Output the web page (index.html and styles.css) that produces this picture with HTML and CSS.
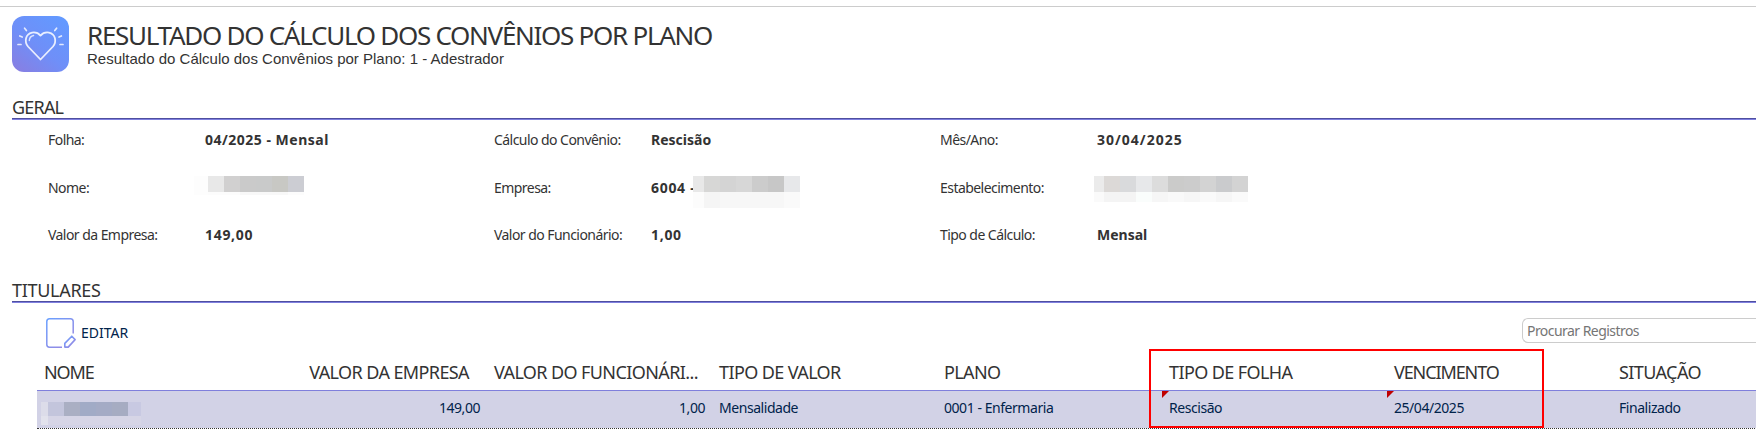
FILE: index.html
```html
<!DOCTYPE html>
<html lang="pt-BR">
<head>
    <meta charset="UTF-8">
    <meta name="viewport" content="width=device-width, initial-scale=1.0">
    <title>Resultado do Cálculo dos Convênios por Plano</title>
    <link rel="stylesheet" href="styles.css">
</head>
<body>
    <div class="header">
        <svg class="logo" width="57" height="56" viewBox="0 0 57 56">
            <defs>
                <linearGradient id="logoFill" x1="0" y1="1" x2="0.8" y2="0">
                    <stop offset="0" stop-color="#8a7de0" />
                    <stop offset="0.5" stop-color="#6f8ff8" />
                    <stop offset="1" stop-color="#6399ff" />
                </linearGradient>
            </defs>
            <rect width="57" height="56" rx="12" fill="url(#logoFill)" />
            <g fill="none" stroke="#fff" stroke-linecap="round" stroke-linejoin="round">
                <path stroke-width="1.8" opacity="0.85" d="M28.5 43.5 L16 30.5 C12 25.5 13.5 18 20 16.6 C23.5 16 26.5 17.2 28.5 19.6 C30.5 17.2 33.5 16 37 16.6 C43.5 18 45 25.5 41 30.5 Z" />
                <path stroke-width="1.4" opacity="0.75" d="M17.3 24.5 C17.5 21.5 19 20 21.6 19.5" />
                <path stroke-width="1.7" opacity="0.8" d="M12.6 12.2 L14.4 14.6 M7.8 20 L10.2 21 M6 28.5 H9 M44.6 12.2 L42.8 14.6 M49.4 20 L47 21 M51 28.5 H48" />
            </g>
        </svg>
        <div class="titles">
            <h1>RESULTADO DO CÁLCULO DOS CONVÊNIOS POR PLANO</h1>
            <p>Resultado do Cálculo dos Convênios por Plano: 1 - Adestrador</p>
        </div>
    </div>

    <h2 class="section">GERAL</h2>
    <div class="fields">
        <div class="label">Folha:</div>
        <div class="value period">04/2025 - Mensal</div>
        <div class="label">Cálculo do Convênio:</div>
        <div class="value">Rescisão</div>
        <div class="label">Mês/Ano:</div>
        <div class="value date">30/04/2025</div>

        <div class="label">Nome:</div>
        <div class="value">
            <svg class="mask mask-nome" width="110" height="19" shape-rendering="crispEdges">
                <rect width="14" height="19" fill="#fdfdfd" />
                <rect x="14" width="16" height="16" fill="#e8e8e8" />
                <rect x="30" width="16" height="16" fill="#d1d0d0" />
                <rect x="46" width="16" height="16" fill="#cacaca" />
                <rect x="62" width="16" height="16" fill="#c9caca" />
                <rect x="78" width="16" height="16" fill="#c8c8c4" />
                <rect x="94" width="16" height="16" fill="#cccdd3" />
                <rect x="14" y="16" width="32" height="3" fill="#fcfcfc" />
                <rect x="46" y="16" width="48" height="3" fill="#f8f8f8" />
                <rect x="94" y="16" width="16" height="3" fill="#fcfcfc" />
            </svg>
        </div>
        <div class="label">Empresa:</div>
        <div class="value number">6004 -
            <svg class="mask mask-empresa" width="107" height="32" shape-rendering="crispEdges">
                <rect width="11" height="16" fill="#e8e8e8" />
                <rect x="11" width="16" height="16" fill="#d7d7d6" />
                <rect x="27" width="16" height="16" fill="#d4d4d4" />
                <rect x="43" width="16" height="16" fill="#d7d7d7" />
                <rect x="59" width="16" height="16" fill="#cccccc" />
                <rect x="75" width="16" height="16" fill="#c7c7c7" />
                <rect x="91" width="16" height="16" fill="#e7e8ea" />
                <rect y="16" width="11" height="16" fill="#fcfcfc" />
                <rect x="11" y="16" width="16" height="16" fill="#f5f5f5" />
                <rect x="27" y="16" width="64" height="16" fill="#f7f7f7" />
                <rect x="91" y="16" width="16" height="16" fill="#fafafa" />
            </svg>
        </div>
        <div class="label">Estabelecimento:</div>
        <div class="value">
            <svg class="mask mask-estab" width="154" height="26" shape-rendering="crispEdges">
                <rect width="10" height="16" fill="#ebebeb" />
                <rect x="10" width="16" height="16" fill="#dcd9d7" />
                <rect x="26" width="16" height="16" fill="#d9dadc" />
                <rect x="42" width="16" height="16" fill="#e7e8ea" />
                <rect x="58" width="16" height="16" fill="#dcdcdc" />
                <rect x="74" width="16" height="16" fill="#cbcbca" />
                <rect x="90" width="16" height="16" fill="#cccccc" />
                <rect x="106" width="16" height="16" fill="#d3d3d3" />
                <rect x="122" width="16" height="16" fill="#cacbcd" />
                <rect x="138" width="16" height="16" fill="#d3d3d3" />
                <rect y="16" width="10" height="10" fill="#fafafa" />
                <rect x="10" y="16" width="32" height="10" fill="#f4f4f4" />
                <rect x="42" y="16" width="16" height="10" fill="#fafdfc" />
                <rect x="58" y="16" width="16" height="10" fill="#f6f6f6" />
                <rect x="74" y="16" width="16" height="10" fill="#f9f9f9" />
                <rect x="90" y="16" width="16" height="10" fill="#f6f6f6" />
                <rect x="106" y="16" width="16" height="10" fill="#fafafa" />
                <rect x="122" y="16" width="16" height="10" fill="#f6f6f6" />
                <rect x="138" y="16" width="16" height="10" fill="#fafafa" />
            </svg>
        </div>

        <div class="label">Valor da Empresa:</div>
        <div class="value number">149,00</div>
        <div class="label">Valor do Funcionário:</div>
        <div class="value number">1,00</div>
        <div class="label">Tipo de Cálculo:</div>
        <div class="value">Mensal</div>
    </div>

    <h2 class="section section-titulares">TITULARES</h2>
    <div class="toolbar">
        <button class="edit">
            <svg width="30" height="30" viewBox="0 0 30 30" fill="none">
                <defs>
                    <linearGradient id="editStroke" x1="0" y1="0" x2="0.7" y2="0.8">
                        <stop offset="0" stop-color="#6aa0ff" />
                        <stop offset="1" stop-color="#918ce6" />
                    </linearGradient>
                </defs>
                <path stroke="url(#editStroke)" stroke-width="1.5" d="M27.2 15.5 V3.5 Q27.2 0.8 24.5 0.8 H3.5 Q0.8 0.8 0.8 3.5 V26.5 Q0.8 29.2 3.5 29.2 H16" />
                <path stroke="url(#editStroke)" stroke-width="1.6" stroke-linejoin="round" d="M18.8 29.1 V25.4 L25.8 18.2 L29.1 21.6 L22.2 29.1 Z" />
            </svg>
            <span>EDITAR</span>
        </button>
        <input class="search" type="text" placeholder="Procurar Registros">
    </div>

    <div class="grid">
        <div class="row head">
            <div class="cell tight">NOME</div>
            <div class="cell num">VALOR DA EMPRESA</div>
            <div class="cell num">VALOR DO FUNCIONÁRI...</div>
            <div class="cell">TIPO DE VALOR</div>
            <div class="cell">PLANO</div>
            <div class="cell">TIPO DE FOLHA</div>
            <div class="cell tight">VENCIMENTO</div>
            <div class="cell">SITUAÇÃO</div>
        </div>
        <div class="row selected">
            <div class="cell">
                <svg class="mask mask-titular" width="100" height="23" shape-rendering="crispEdges">
                    <rect width="7" height="14" fill="#dcdce9" />
                    <rect x="7" width="16" height="14" fill="#c3c5dc" />
                    <rect x="23" width="16" height="14" fill="#aaafc3" />
                    <rect x="39" width="16" height="14" fill="#a1abc6" />
                    <rect x="55" width="16" height="14" fill="#a4abc5" />
                    <rect x="71" width="16" height="14" fill="#a6acc2" />
                    <rect x="87" width="13" height="14" fill="#c8c9e2" />
                    <rect y="14" width="7" height="9" fill="#e2e2ec" />
                    <rect x="7" y="14" width="93" height="9" fill="#d6d5e6" />
                </svg>
            </div>
            <div class="cell num">149,00</div>
            <div class="cell num">1,00</div>
            <div class="cell">Mensalidade</div>
            <div class="cell">0001 - Enfermaria</div>
            <div class="cell changed">Rescisão</div>
            <div class="cell changed">25/04/2025</div>
            <div class="cell">Finalizado</div>
        </div>
        <div class="highlight"></div>
    </div>
</body>
</html>
```
FILE: styles.css
```css
body {
    margin: 0;
    padding-top: 6px;
    font-family: "Noto Sans", sans-serif;
    font-size: 14px;
    background-color: #fff;
    color: #333;
    overflow: hidden;
}

.header {
    display: flex;
    gap: 18px;
    height: 87px;
    padding: 9px 0 0 12px;
    box-sizing: border-box;
    border-top: 1px solid #ccc;
}

.titles h1 {
    margin: 5px 0 0;
    font-size: 26px;
    font-weight: normal;
    line-height: 28px;
    letter-spacing: -1.28px;
    white-space: nowrap;
}

.titles p {
    margin: 1px 0 0;
    font-family: "Liberation Sans", Arial, sans-serif;
    font-size: 15px;
    line-height: 18px;
}

.section {
    height: 25px;
    margin: 0 0 0 12px;
    font-size: 18px;
    font-weight: normal;
    line-height: 29px;
    letter-spacing: -0.8px;
    border-bottom: 1px solid #8080e0;
    box-shadow: inset 0 -1px #4f4f9f;
    padding-bottom: 1px;
}

.fields {
    display: grid;
    grid-template-columns: repeat(3, 156px 290px);
    grid-template-rows: 48px 47px 48px;
    height: 143px;
    padding: 10px 0 0 49px;
    line-height: 20px;
}

.label {
    margin-left: -1px;
    letter-spacing: -0.55px;
}

.value {
    position: relative;
    font-weight: bold;
}

.period {
    letter-spacing: 0.5px;
}

.number {
    letter-spacing: 0.7px;
}

.date {
    letter-spacing: 1px;
}

.mask {
    position: absolute;
}

.mask-nome {
    left: -11px;
    top: -2px;
}

.mask-empresa {
    left: 42px;
    top: -2px;
}

.mask-estab {
    left: -3px;
    top: -2px;
}

.section-titulares {
    margin-top: 3px;
    letter-spacing: -0.3px;
}

.toolbar {
    display: flex;
    justify-content: space-between;
    height: 46px;
    padding: 15px 0 0 46px;
    box-sizing: border-box;
}

.edit {
    display: flex;
    gap: 5px;
    padding: 0;
    border: none;
    background: none;
    color: #00234b;
    font: inherit;
    line-height: 30px;
}

.search {
    width: 234px;
    height: 25px;
    padding: 0 4px;
    box-sizing: border-box;
    border: 1px solid #ccc;
    border-right: none;
    border-radius: 6px 0 0 6px;
    font: inherit;
    letter-spacing: -0.55px;
}

.search::placeholder {
    color: #757575;
}

.grid {
    position: relative;
    margin-left: 37px;
}

.row {
    display: flex;
    width: 1800px;
}

.cell {
    position: relative;
    width: 225px;
    padding: 0 7px;
    box-sizing: border-box;
    white-space: nowrap;
}

.num {
    text-align: right;
}

.head {
    height: 41px;
    font-size: 18px;
    line-height: 47px;
    letter-spacing: -0.6px;
    border-bottom: 1px solid #7f7fdc;
}

.head .num {
    padding-right: 18px;
}

.head .tight {
    letter-spacing: -1.1px;
}

.selected {
    height: 37px;
    line-height: 34px;
    letter-spacing: -0.45px;
    color: #00234b;
    background-color: #d2d2e6;
    background-clip: padding-box;
    border-bottom: 1px dotted #333;
}

.mask-titular {
    left: 4px;
    top: 11px;
}

.changed::before {
    content: "";
    position: absolute;
    left: 0;
    top: 0;
    border-top: 7px solid #c00000;
    border-right: 7px solid transparent;
}

.highlight {
    position: absolute;
    left: 1112px;
    top: 0;
    width: 395px;
    height: 79px;
    box-sizing: border-box;
    border: 2px solid #f00;
}
```
